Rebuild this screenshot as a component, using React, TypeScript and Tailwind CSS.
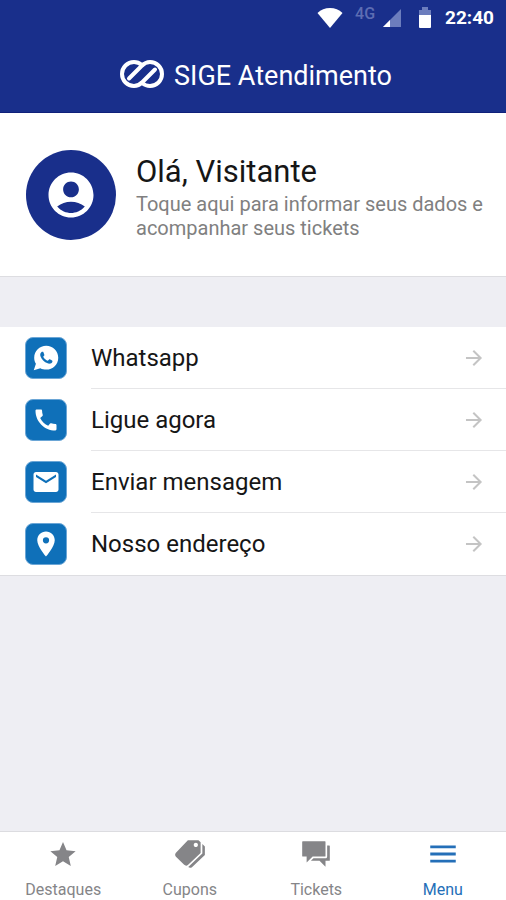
import { IoLogoWhatsapp, IoMdArrowForward, IoMdChatboxes, IoMdPricetags, IoMdStar } from "react-icons/io"
import { MdAccountCircle, MdCall, MdEmail, MdLocationOn, MdMenu } from "react-icons/md"

const contacts = [
  { label: "Whatsapp", icon: <IoLogoWhatsapp size={28} /> },
  { label: "Ligue agora", icon: <MdCall size={28} /> },
  { label: "Enviar mensagem", icon: <MdEmail size={30} /> },
  { label: "Nosso endereço", icon: <MdLocationOn size={30} /> },
]

const tabs = [
  { label: "Destaques", icon: <IoMdStar size={32} />, active: false },
  { label: "Cupons", icon: <IoMdPricetags size={34} />, active: false },
  { label: "Tickets", icon: <IoMdChatboxes size={34} />, active: false },
  { label: "Menu", icon: <MdMenu size={34} />, active: true },
]

function Logo() {
  return (
    <svg width="44" height="28" viewBox="0 0 44 28" fill="none" stroke="currentColor" strokeWidth="4" strokeLinecap="round" aria-hidden="true">
      <path d="M22 5C19.5 3 17 2 14 2A12 12 0 0 0 14 26C17.5 26 20 24.5 22.5 22L35 9.5" />
      <path d="M22 23C24.5 25 27 26 30 26A12 12 0 0 0 30 2C26.5 2 24 3.5 21.5 6L9 18.5" />
    </svg>
  )
}

function StatusBar() {
  return (
    <div className="flex h-9 items-center justify-end pr-3">
      <svg className="mr-3" width="26" height="20" viewBox="0 0 26 20" fill="currentColor" aria-hidden="true">
        <path d="M13 20L0.5 5C4 1.5 8 0 13 0S22 1.5 25.5 5Z" />
      </svg>
      <span className="mr-2 -mt-2 text-base leading-5 font-medium text-[#5d6db3]">4G</span>
      <svg className="mr-4" width="18" height="18" viewBox="0 0 18 18" aria-hidden="true">
        <path d="M0 18L18 0V18Z" fill="#6c7dbd" />
        <path d="M0 18L7 11V18Z" fill="#fff" />
      </svg>
      <svg className="mr-3" width="16" height="22" viewBox="0 0 16 22" aria-hidden="true">
        <path d="M5 0H11V3H14V9H2V3H5Z" fill="#6c7dbd" />
        <path d="M2 8H14V20Q14 21 13 21H3Q2 21 2 20Z" fill="#fff" />
      </svg>
      <span className="text-[19px] leading-6 font-bold">22:40</span>
    </div>
  )
}

export default function App() {
  return (
    <div className="flex min-h-screen flex-col bg-[#eeeef3] font-['Roboto',sans-serif] text-[#161616]">
      <header className="border-b border-[#10207a] bg-[#192f8b] text-white">
        <StatusBar />
        <div className="flex h-[76px] items-center justify-center gap-2.5 pl-1.5">
          <Logo />
          <h1 className="pt-1 text-[27px] leading-8">SIGE Atendimento</h1>
        </div>
      </header>

      <main className="flex-1">
        <button className="flex h-[164px] w-full items-center gap-5 border-b border-[#dddde1] bg-white pr-5 pl-[26px] text-left">
          <span className="flex size-[90px] shrink-0 items-center justify-center rounded-full bg-[#192f8b] text-white">
            <MdAccountCircle size={54} />
          </span>
          <span className="flex flex-col gap-1 pt-1.5">
            <span className="text-[31px] leading-8">Olá, Visitante</span>
            <span className="text-xl leading-6 text-[#808080]">Toque aqui para informar seus dados e acompanhar seus tickets</span>
          </span>
        </button>

        <ul className="mt-[50px] border-b border-[#dddde1] bg-white">
          {contacts.map(({ label, icon }, i) => (
            <li key={label}>
              <button className="flex h-[62px] w-full items-center gap-6 pl-[25px] text-left">
                <span className="flex size-[42px] shrink-0 items-center justify-center rounded-lg border border-[#6ba6d6] bg-[#0f70b9] text-white">
                  {icon}
                </span>
                <span className={`flex h-full flex-1 items-center justify-between pr-5 ${i < contacts.length - 1 ? "border-b border-[#e6e6e8]" : ""}`}>
                  <span className="text-2xl">{label}</span>
                  <IoMdArrowForward size={24} className="text-[#c4c4c4]" />
                </span>
              </button>
            </li>
          ))}
        </ul>
      </main>

      <nav className="grid h-[69px] grid-cols-4 border-t border-[#dcdce0] bg-white">
        {tabs.map(({ label, icon, active }) => (
          <button key={label} className={`flex flex-col items-center justify-between pt-1 ${active ? "text-[#246fb8]" : "text-[#858588]"}`}>
            <span className="flex h-9 items-center">{icon}</span>
            <span className="text-base leading-5">{label}</span>
          </button>
        ))}
      </nav>
    </div>
  )
}
